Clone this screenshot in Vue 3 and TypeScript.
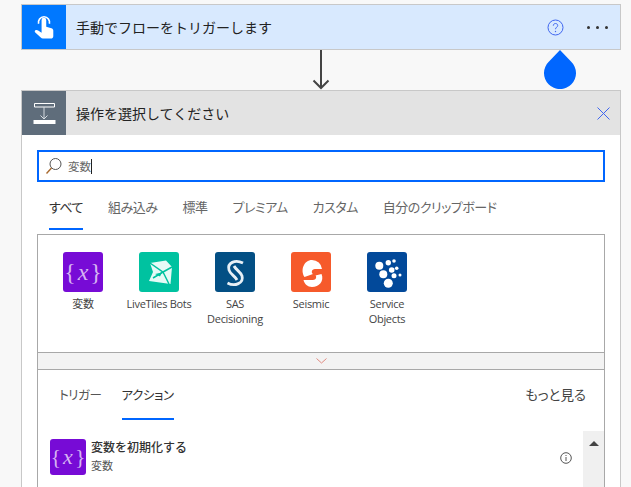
<script setup lang="ts">
interface Connector {
  id: string;
  name: string;
  color: string;
}

const categories = ['すべて', '組み込み', '標準', 'プレミアム', 'カスタム', '自分のクリップボード']

const connectors: Connector[] = [
  { id: 'variable', name: '変数', color: '#770bd6' },
  { id: 'livetiles', name: 'LiveTiles Bots', color: '#00c2a0' },
  { id: 'sas', name: 'SAS Decisioning', color: '#034f84' },
  { id: 'seismic', name: 'Seismic', color: '#f65a2b' },
  { id: 'service', name: 'Service Objects', color: '#02499a' },
]
</script>

<template>
  <div class="page">
    <div class="trigger">
      <div class="trigger-icon">
        <svg width="26" height="28" viewBox="0 0 28 30">
          <path d="M8.2 11.5a6 6 0 1 1 11.6 0" fill="none" stroke="#fff" stroke-width="1.8" />
          <path d="M11.4 7.5a2.5 2.5 0 0 1 5 0v7.3l5.6 1.5c1.2.4 2 1.3 2 2.5v6.2c0 1.6-1.2 2.5-2.6 2.5h-8.6c-1 0-1.7-.4-2.3-1.2L4.6 21c-.8-1-.7-1.9.1-2.5 1-.6 2.100-.5 3 .2l3.700 2.500z" fill="#fff" />
        </svg>
      </div>
      <span class="card-title">手動でフローをトリガーします</span>
      <svg class="help" width="17" height="17" viewBox="0 0 17 17">
        <circle cx="8.500" cy="8.500" r="7.500" fill="none" stroke="#3f66f0" />
        <path d="M6.300 6.700c0-1.400 1-2.200 2.200-2.200s2.200.8 2.200 2c0 1.700-2.200 1.800-2.200 3.700" fill="none" stroke="#3f66f0" />
        <circle cx="8.500" cy="12.500" r=".7" fill="#3f66f0" />
      </svg>
      <div class="dots"><i /><i /><i /></div>
      <svg class="drop" width="32" height="39" viewBox="0 0 32 39">
        <path d="M16 0 27 11.500A16 16 0 1 1 5 11.500z" fill="#0066ff" />
      </svg>
    </div>

    <div class="connector">
      <svg width="20" height="40" viewBox="0 0 20 40">
        <path d="M10 0V38M2.500 30.500 10 38l7.500-7.500" fill="none" stroke="#444" stroke-width="2" />
      </svg>
    </div>

    <div class="action">
      <div class="action-header">
        <div class="action-icon">
          <svg width="24" height="24" viewBox="0 0 24 24">
            <path d="M2.500 2.500h20v3.500h-20z" fill="none" stroke="#fff" />
            <path d="M12 6v12M8.500 14.500 12 18l3.500-3.500" fill="none" stroke="#d5dbe0" />
            <path d="M1.500 19h22v4h-22z" fill="#fff" />
          </svg>
        </div>
        <span class="card-title">操作を選択してください</span>
        <svg class="close" width="13" height="13" viewBox="0 0 13 13">
          <path d="M.5.500l12 12M12.500.500l-12 12" stroke="#3f66f0" fill="none" />
        </svg>
      </div>

      <div class="action-body">
        <div class="search">
          <svg width="18" height="18" viewBox="0 0 18 18">
            <circle cx="10.500" cy="7" r="5.500" fill="none" stroke="#555" />
            <path d="M6.500 11 1.500 16.500" stroke="#a8692e" stroke-width="1.400" fill="none" />
          </svg>
          <span class="search-text">変数</span><span class="caret" />
        </div>

        <div class="tabs">
          <div
            v-for="(cat, index) in categories"
            :key="cat"
            class="tab"
            :class="{ active: index === 0 }"
          >
            {{ cat }}
          </div>
        </div>

        <div class="panel">
          <div class="grid">
            <div v-for="c in connectors" :key="c.id" class="item">
              <div class="tile" :style="{ background: c.color }">
                <span v-if="c.id === 'variable'" class="var-glyph">{<em>x</em>}</span>
                <svg v-else-if="c.id === 'livetiles'" width="40" height="40" viewBox="0 0 40 40">
                  <path d="M11 11 27 8.500 33 15 31.500 32 10 29 14 20z" fill="#e6faf6" />
                  <path d="M11 11 24 20 33 15M24 20 14 26M24 20 30 32" stroke="#00c2a0" stroke-width="1.500" fill="none" />
                  <path d="M16 22 23 20.500 21 24.500z" fill="#00c2a0" />
                </svg>
                <svg v-else-if="c.id === 'sas'" width="40" height="40" viewBox="0 0 40 40">
                  <path d="M28 11C20 7 12 11 14 18 15 22 20 24 22 28" fill="none" stroke="#e8f0f6" stroke-width="2.800" />
                  <path d="M12.500 31C20 35 29 31 27 24 26 20 21 18 19 14" fill="none" stroke="#e8f0f6" stroke-width="2.800" />
                </svg>
                <svg v-else-if="c.id === 'seismic'" width="40" height="40" viewBox="0 0 40 40">
                  <path d="M21 8A10 10 0 0 1 31 17H24C20.500 17 20 21 22 22L13.500 25C9 18 13 8 21 8z" fill="#fff" />
                  <path d="M30.500 22C33.500 29 28 35 21 35 16.500 35 13.500 32 12.500 28H22C25 28 26 25 24.500 23.500z" fill="#fff" />
                </svg>
                <svg v-else width="40" height="40" viewBox="0 0 40 40">
                  <g fill="#fff">
                    <circle cx="12.300" cy="13.700" r="4" />
                    <circle cx="16.300" cy="22.300" r="4" />
                    <circle cx="21.300" cy="31.300" r="4.500" />
                    <circle cx="21.300" cy="10.700" r="2.700" />
                    <circle cx="27" cy="9" r="1.800" />
                    <circle cx="24.700" cy="18" r="2.800" />
                    <circle cx="29.700" cy="16.300" r="1.800" />
                    <circle cx="27" cy="23.700" r="2.500" />
                    <circle cx="33" cy="23" r="1.500" />
                  </g>
                </svg>
              </div>
              <div class="item-name">{{ c.name }}</div>
            </div>
          </div>
          <div class="expander">
            <svg width="11" height="6" viewBox="0 0 11 6">
              <path d="M.5.500l5 4.500 5-4.500" fill="none" stroke="#e08a80" />
            </svg>
          </div>
          <div class="results">
            <div class="result-head">
              <div class="result-tab">トリガー</div>
              <div class="result-tab active">アクション</div>
              <div class="more">もっと見る</div>
            </div>
            <div class="result-list">
              <div class="row">
                <div class="tile row-tile" style="background: #770bd6">
                  <span class="var-glyph">{<em>x</em>}</span>
                </div>
                <div class="row-text">
                  <div class="row-title">変数を初期化する</div>
                  <div class="row-sub">変数</div>
                </div>
                <svg class="info" width="12" height="12" viewBox="0 0 12 12">
                  <circle cx="6" cy="6" r="5.300" fill="none" stroke="#555" />
                  <path d="M6 5v4M6 3v1" stroke="#555" fill="none" />
                </svg>
              </div>
              <div class="scrollbar"><div class="arrow-up" /></div>
            </div>
          </div>
        </div>
      </div>
    </div>
  </div>
</template>

<style scoped>
.page {
  box-sizing: border-box;
  width: 631px;
  height: 487px;
  overflow: hidden;
  padding: 4px 10px 0 21px;
  background: #f8f8f8;
  font-family: "Open Sans", "Noto Sans CJK JP", sans-serif;
  color: #333;
}

.trigger {
  position: relative;
  display: flex;
  align-items: center;
  height: 46px;
  box-sizing: border-box;
  border: 1px solid #c8c8c8;
  background: #d8e9fe;
}

.trigger-icon,
.action-icon {
  flex: none;
  width: 44px;
  height: 44px;
  display: flex;
  align-items: center;
  justify-content: center;
}

.trigger-icon {
  background: #0078ff;
}

.action-icon {
  background: #5f6d7b;
}

.card-title {
  margin-left: 10px;
  font-size: 14px;
  color: #222;
  flex: 1;
}

.help {
  margin-right: 23px;
}

.dots {
  display: flex;
  gap: 6px;
  margin-right: 12px;
}

.dots i {
  width: 3px;
  height: 3px;
  border-radius: 50%;
  background: #333;
}

.drop {
  position: absolute;
  left: 522px;
  top: 45px;
}

.connector {
  height: 40px;
  display: flex;
  justify-content: center;
}

.action {
  border: 1px solid #c8c8c8;
  border-bottom: 0;
  background: #fff;
}

.action-header {
  display: flex;
  align-items: center;
  height: 44px;
  background: #e3e3e3;
}

.close {
  margin-right: 10px;
}

.action-body {
  padding: 15px 15px 0;
}

.search {
  display: flex;
  align-items: center;
  height: 32px;
  box-sizing: border-box;
  border: 2px solid #0066ff;
  padding-left: 6px;
}

.search-text {
  margin-left: 5px;
  font-size: 11.5px;
  color: #666;
}

.caret {
  width: 1px;
  height: 15px;
  background: #222;
}

.tabs {
  display: flex;
  gap: 25px;
  padding: 0 12px;
  height: 52px;
  box-sizing: border-box;
}

.tab {
  height: 46px;
  line-height: 50px;
  font-size: 13px;
  letter-spacing: -0.5px;
  font-feature-settings: "palt";
  color: #666;
  white-space: nowrap;
}

.tab.active {
  color: #333;
  border-bottom: 2px solid #0066ff;
}

.panel {
  border: 1px solid #a8a8a8;
  border-bottom: 0;
}

.grid {
  display: flex;
  height: 117px;
  padding-left: 7px;
}

.item {
  width: 76px;
  padding-top: 17px;
  box-sizing: border-box;
  display: flex;
  flex-direction: column;
  align-items: center;
}

.tile {
  flex: none;
  width: 40px;
  height: 40px;
  border-radius: 3px;
  display: flex;
  align-items: center;
  justify-content: center;
  overflow: hidden;
}

.item-name {
  margin-top: 4px;
  max-width: 68px;
  font-size: 11px;
  line-height: 15px;
  letter-spacing: -0.3px;
  text-align: center;
  color: #444;
}

.var-glyph {
  font-family: "Liberation Serif", serif;
  font-size: 24px;
  color: #d6b4f2;
  white-space: nowrap;
}

.var-glyph em {
  padding: 0 2px;
}

.expander {
  height: 16px;
  display: flex;
  align-items: center;
  justify-content: center;
  background: #f3f3f3;
  border-top: 1px solid #a8a8a8;
  border-bottom: 1px solid #a8a8a8;
}

.result-head {
  display: flex;
  padding: 0 18px 0 21px;
  height: 50px;
  gap: 20px;
}

.result-tab {
  height: 48px;
  line-height: 52px;
  font-size: 12.5px;
  letter-spacing: -0.4px;
  font-feature-settings: "palt";
  color: #555;
}

.result-tab.active {
  color: #333;
  border-bottom: 2px solid #0066ff;
}

.more {
  margin-left: auto;
  line-height: 50px;
  font-size: 13.5px;
  font-feature-settings: "palt";
  color: #444;
}

.result-list {
  display: flex;
  margin-top: 11px;
}

.row {
  flex: 1;
  display: flex;
  align-items: flex-start;
  padding: 8px 11px 0 12px;
}

.row-tile {
  width: 36px;
  height: 36px;
}

.row-tile .var-glyph {
  font-size: 22px;
}

.row-text {
  flex: 1;
  margin-left: 5px;
}

.row-title {
  font-size: 12px;
  font-weight: 500;
  line-height: 18px;
  color: #333;
}

.row-sub {
  font-size: 11px;
  line-height: 17px;
  color: #555;
}

.info {
  margin-top: 13px;
}

.scrollbar {
  width: 21px;
  height: 60px;
  background: #f0f0f0;
  display: flex;
  justify-content: center;
  padding-top: 10px;
  box-sizing: border-box;
}

.arrow-up {
  width: 0;
  height: 0;
  border-left: 5px solid transparent;
  border-right: 5px solid transparent;
  border-bottom: 5px solid #444;
}
</style>

<style>
html,
body {
  margin: 0;
  background: #f8f8f8;
}
</style>
